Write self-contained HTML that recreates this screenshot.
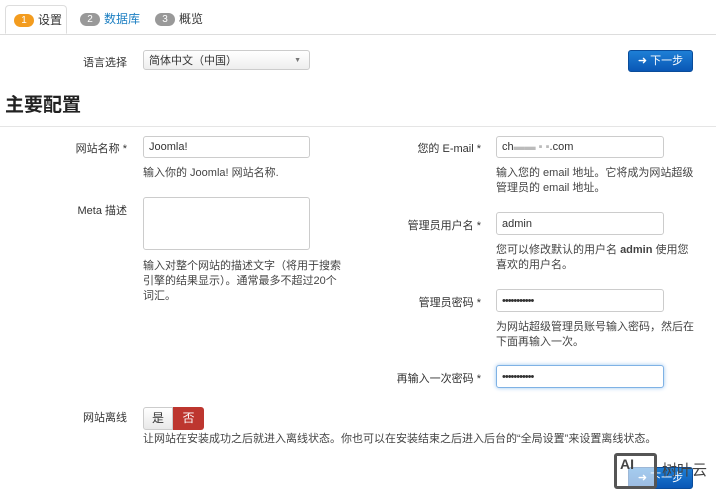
<!DOCTYPE html><html><head><meta charset="utf-8"><style>
body{margin:0;width:716px;height:500px;overflow:hidden;background:#fff;font-family:"Liberation Sans","Noto Sans CJK SC",sans-serif;font-size:12px;color:#333;position:relative}
.a{position:absolute;white-space:nowrap}
.tabline{position:absolute;left:0;right:0;top:34px;border-top:1px solid #ddd}
.tab{position:absolute;top:5px;height:29px;line-height:29px;font-size:12px}
.badge{display:inline-block;width:20px;height:13px;line-height:13px;border-radius:7px;background:#999;color:#fff;font-size:10px;text-align:center;margin-right:4px;vertical-align:1px}
.inp{position:absolute;border:1px solid #ccc;border-radius:3px;padding-left:5px;box-sizing:border-box;font-size:11px;background:#fff;display:flex;align-items:center}
.lbl{position:absolute;text-align:right;font-size:11px}
.help{position:absolute;font-size:11px;line-height:15px;color:#444}
.btn{position:absolute;width:65px;height:22px;border-radius:3px;background:linear-gradient(#1e7fd6,#0a57b5);border:1px solid #0a4c9a;color:#fff;font-size:11px;line-height:20px;text-align:center;box-sizing:border-box}
</style></head><body>
<div class="tabline"></div>
<div class="tab" style="left:5px;width:62px;border:1px solid #ddd;border-bottom:1px solid #fff;border-radius:4px 4px 0 0;background:#fff;padding-left:8px;box-sizing:border-box"><span class="badge" style="background:#f39c1f">1</span>设置</div>
<div class="tab" style="left:80px;color:#1a7ec2"><span class="badge">2</span>数据库</div>
<div class="tab" style="left:155px"><span class="badge">3</span>概览</div>
<div class="lbl" style="left:60px;width:67px;top:54px">语言选择</div>
<div class="inp" style="left:143px;top:50px;width:167px;height:20px;background:linear-gradient(#fff,#eee)">简体中文（中国）<span style="position:absolute;right:8px;font-size:7px;color:#777">▼</span></div>
<div class="btn" style="left:628px;top:50px">➜ 下一步</div>
<div class="a" style="left:5px;top:90px;font-size:19px;font-weight:bold;color:#222">主要配置</div>
<div class="a" style="left:0;right:0;top:126px;border-top:1px solid #e5e5e5"></div>
<div class="lbl" style="left:40px;width:87px;top:140px">网站名称 *</div>
<div class="inp" style="left:143px;top:136px;width:167px;height:22px">Joomla!</div>
<div class="help" style="left:143px;top:166px">输入你的 Joomla! 网站名称.</div>
<div class="lbl" style="left:40px;width:87px;top:202px">Meta 描述</div>
<div class="inp" style="left:143px;top:197px;width:167px;height:53px"></div>
<div class="help" style="left:143px;top:259px;width:200px;white-space:normal">输入对整个网站的描述文字（将用于搜索引擎的结果显示）。通常最多不超过20个词汇。</div>
<div class="lbl" style="left:380px;width:101px;top:140px">您的 E-mail *</div>
<div class="inp" style="left:496px;top:136px;width:168px;height:22px">ch<span style="color:#bbb">▬▬ ▪ ▪</span>.com</div>
<div class="help" style="left:496px;top:166px;width:200px;white-space:normal">输入您的 email 地址。它将成为网站超级管理员的 email 地址。</div>
<div class="lbl" style="left:380px;width:101px;top:217px">管理员用户名 *</div>
<div class="inp" style="left:496px;top:212px;width:168px;height:23px">admin</div>
<div class="help" style="left:496px;top:243px;width:200px;white-space:normal">您可以修改默认的用户名 <b>admin</b> 使用您喜欢的用户名。</div>
<div class="lbl" style="left:380px;width:101px;top:294px">管理员密码 *</div>
<div class="inp" style="left:496px;top:289px;width:168px;height:23px;letter-spacing:-1px">•••••••••••</div>
<div class="help" style="left:496px;top:320px;width:205px;white-space:normal">为网站超级管理员账号输入密码，然后在下面再输入一次。</div>
<div class="lbl" style="left:380px;width:101px;top:370px">再输入一次密码 *</div>
<div class="inp" style="left:496px;top:365px;width:168px;height:23px;letter-spacing:-1px;border-color:#7fb2e5;box-shadow:0 0 4px #9cc5ee">•••••••••••</div>
<div class="lbl" style="left:40px;width:87px;top:409px">网站离线</div>
<div class="a" style="left:143px;top:407px;width:30px;height:23px;border:1px solid #ccc;border-radius:3px 0 0 3px;background:linear-gradient(#fff,#e8e8e8);text-align:center;line-height:21px;box-sizing:border-box">是</div>
<div class="a" style="left:173px;top:407px;width:31px;height:23px;border-radius:0 3px 3px 0;background:#bd362f;color:#fff;text-align:center;line-height:23px">否</div>
<div class="help" style="left:143px;top:432px">让网站在安装成功之后就进入离线状态。你也可以在安装结束之后进入后台的“全局设置”来设置离线状态。</div>
<div class="btn" style="left:628px;top:467px">➜ 下一步</div>
<div class="a" style="left:614px;top:453px;width:43px;height:36px;border:3px solid #555;border-radius:3px;box-sizing:border-box;background:rgba(255,255,255,.6);font-weight:bold;font-size:14px;color:#444;padding-left:3px">AI</div>
<div class="a" style="left:662px;top:459px;font-size:15px;color:#444">树叶云</div>
</body></html>
